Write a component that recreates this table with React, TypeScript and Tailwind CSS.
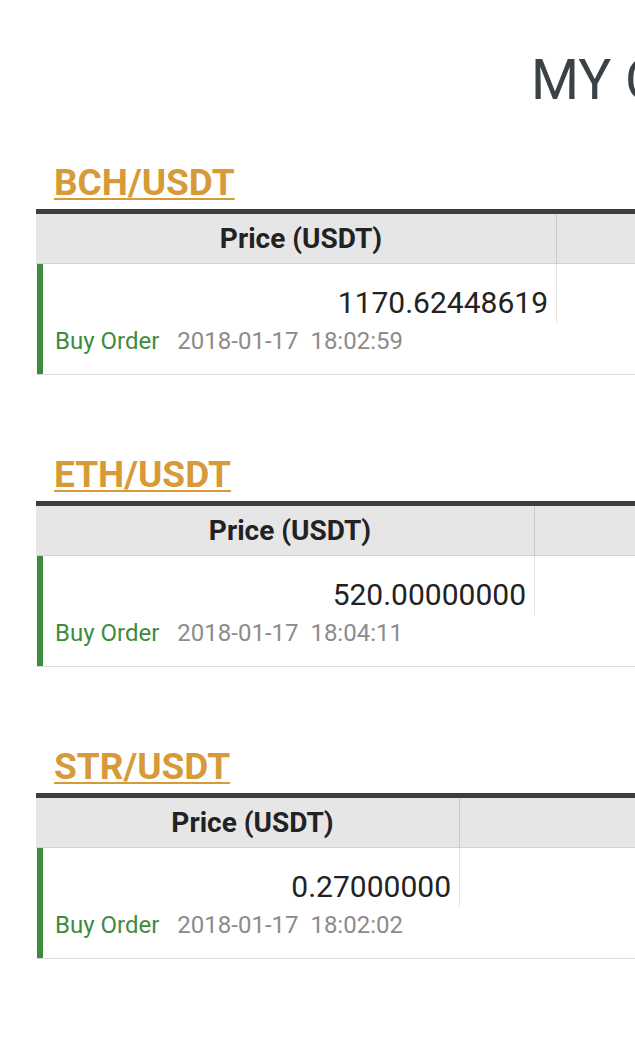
import React from 'react';

type Order = {
  pair: string;
  price: string;
  date: string;
  priceCol: string;
};

const orders: Order[] = [
  { pair: 'BCH/USDT', price: '1170.62448619', date: '2018-01-17\u00a0\u00a018:02:59', priceCol: 'w-[521px]' },
  { pair: 'ETH/USDT', price: '520.00000000', date: '2018-01-17\u00a0\u00a018:04:11', priceCol: 'w-[499px]' },
  { pair: 'STR/USDT', price: '0.27000000', date: '2018-01-17\u00a0\u00a018:02:02', priceCol: 'w-[424px]' },
];

// one pair block: heading + order table
const OrderTable = ({ order }: { order: Order }) => (
  <div className="flex flex-col">
    <a className="ml-[54px] text-[37px] leading-none font-bold text-[#d69a38] underline underline-offset-[3px] decoration-2 w-fit">
      {order.pair}
    </a>
    <div className="ml-9 mt-[8px] w-[900px] border-t-[5px] border-[#3b3e40]">
      <div className="flex h-[50px] bg-[#e6e6e6] border-b border-[#d2d2d2]">
        <div className={`${order.priceCol} flex items-center justify-center pl-[10px] border-r border-[#c9c9c9] text-[28px] font-bold text-[#222]`}>
          Price (USDT)
        </div>
        <div className="flex-1" />
      </div>
      <div className="ml-px border-l-[6px] border-[#3e8a3c]">
        <div className="flex h-[59px]">
          <div className={`${order.priceCol} -ml-[7px] flex items-end justify-end pr-[8px] pb-[5px] border-r border-[#e2e2e2] text-[30px] leading-none text-[#222]`}>
            {order.price}
          </div>
          <div className="flex-1" />
        </div>
        <div className="flex items-center gap-[18px] pl-3 pt-[6px] h-[51px] pb-[21px] text-[24px] leading-none">
          <span className="text-[#3f8b3d]">Buy Order</span>
          <span className="text-[#8c8c8c]">{order.date}</span>
        </div>
      </div>
      <div className="h-px bg-[#dcdcdc]" />
    </div>
  </div>
);

export default function App() {
  return (
    <div
      className="w-[635px] h-[1040px] overflow-hidden bg-white"
      style={{ fontFamily: 'Roboto, "Noto Sans", sans-serif' }}
    >
      <h1 className="mt-[53px] pl-[531px] whitespace-nowrap text-[55px] leading-none font-normal text-[#3a4245]">
        MY ORDERS
      </h1>
      <div className="mt-[56px] flex flex-col gap-[81px]">
        {orders.map((o) => (
          <OrderTable key={o.pair} order={o} />
        ))}
      </div>
    </div>
  );
}
